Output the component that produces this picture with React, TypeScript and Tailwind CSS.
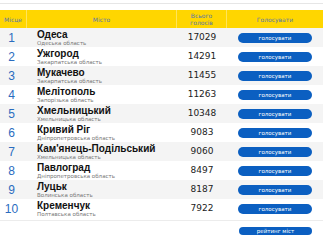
const ROWS = [
  { city: 'Одеса', region: 'Одеська область', votes: 17029 },
  { city: 'Ужгород', region: 'Закарпатська область', votes: 14291 },
  { city: 'Мукачево', region: 'Закарпатська область', votes: 11455 },
  { city: 'Мелітополь', region: 'Запорізька область', votes: 11263 },
  { city: 'Хмельницький', region: 'Хмельницька область', votes: 10348 },
  { city: 'Кривий Ріг', region: 'Дніпропетровська область', votes: 9083 },
  { city: "Кам'янець-Подільський", region: 'Хмельницька область', votes: 9060 },
  { city: 'Павлоград', region: 'Дніпропетровська область', votes: 8497 },
  { city: 'Луцьк', region: 'Волинська область', votes: 8187 },
  { city: 'Кременчук', region: 'Полтавська область', votes: 7922 },
];

const cols = 'grid grid-cols-[27px_150px_50px_1fr]';

export default function App() {
  return (
    <div className="w-[323px] h-[240px] bg-white font-['DejaVu_Sans',sans-serif] overflow-hidden">
      <div className="mt-[3px] h-px bg-[#e6e6e6]" />

      {/* Header */}
      <div className={`${cols} mt-[6px] h-[18px] bg-[#ffd600] text-[6px] text-[#5a76a8]`}>
        <div className="flex items-center justify-center border-r border-[#ffe45c]">Місце</div>
        <div className="flex items-center justify-center border-r border-[#ffe45c]">Місто</div>
        <div className="flex flex-col items-center justify-center leading-[7px] border-r border-[#ffe45c]">
          <span>Всього</span>
          <span>голосів</span>
        </div>
        <div className="flex items-center justify-center">Голосувати</div>
      </div>

      {/* Rows */}
      {ROWS.map((r, i) => (
        <div key={r.city} className={`${cols} h-[19px] ${i % 2 === 0 ? 'bg-[#f4f4f4]' : 'bg-white'}`}>
          <div className="flex items-center justify-center pr-[4px] text-[12px] text-[#2a6cbf] font-['Liberation_Sans',sans-serif]">
            {i + 1}
          </div>
          <div className="flex flex-col justify-center pl-[10px] whitespace-nowrap">
            <span className="text-[10px] leading-[11px] font-bold text-[#111] font-['Liberation_Sans',sans-serif]">{r.city}</span>
            <span className="text-[5.5px] leading-[6px] text-[#777]">{r.region}</span>
          </div>
          <div className="flex items-center justify-center text-[9px] text-[#222]">{r.votes}</div>
          <div className="flex items-center pl-[11px]">
            <button className="w-[74px] h-[10px] rounded-full bg-[#0b5fc1] text-white text-[5.5px] leading-[10px]">
              голосувати
            </button>
          </div>
        </div>
      ))}

      <div className="mt-[2px] h-px bg-[#ececec]" />
      <div className="flex justify-end pr-[11px] mt-[6px]">
        <button className="w-[73px] h-[8px] rounded-full bg-[#0b5fc1] text-white text-[5.5px] leading-[8px]">
          рейтинг міст
        </button>
      </div>
    </div>
  );
}
